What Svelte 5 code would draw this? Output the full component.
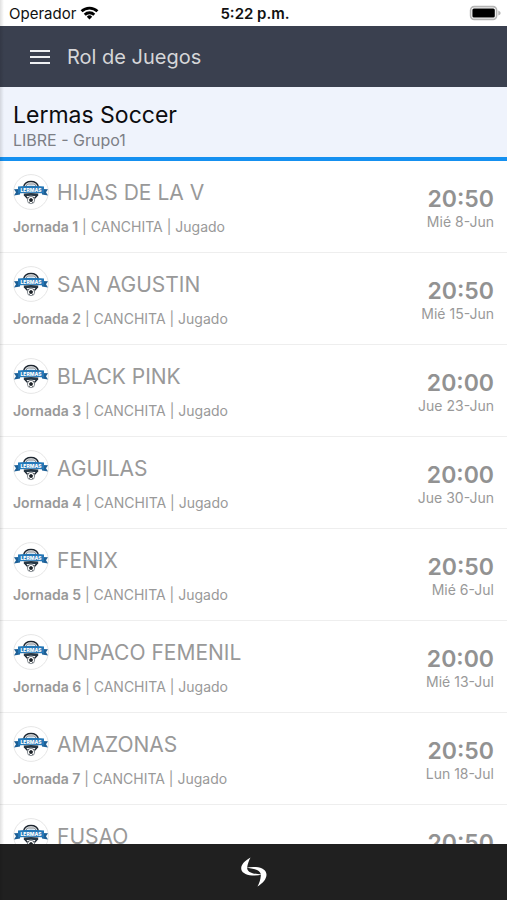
<script>
    let team = "Lermas Soccer";
    let group = "LIBRE - Grupo1";
    let games = [
        { round: 1, rival: "HIJAS DE LA V", time: "20:50", date: "Mié 8-Jun" },
        { round: 2, rival: "SAN AGUSTIN", time: "20:50", date: "Mié 15-Jun" },
        { round: 3, rival: "BLACK PINK", time: "20:00", date: "Jue 23-Jun" },
        { round: 4, rival: "AGUILAS", time: "20:00", date: "Jue 30-Jun" },
        { round: 5, rival: "FENIX", time: "20:50", date: "Mié 6-Jul" },
        { round: 6, rival: "UNPACO FEMENIL", time: "20:00", date: "Mié 13-Jul" },
        { round: 7, rival: "AMAZONAS", time: "20:50", date: "Lun 18-Jul" },
        { round: 8, rival: "FUSAO", time: "20:50", date: "Lun 25-Jul" }
    ];
</script>

<div class="screen">
    <div class="status">
        <div class="carrier">
            <span>Operador</span>
            <svg width="19" height="14" viewBox="0 0 20 15" fill="none" stroke="#000" stroke-width="3" aria-hidden="true">
                <path d="M1.5 5.7a12.2 12.2 0 0 1 17 0" />
                <path d="M4.9 9.3a7.3 7.3 0 0 1 10.2 0" />
                <path d="M10 14.4l-2.9-3a4.2 4.2 0 0 1 5.8 0z" fill="#000" stroke="none" />
            </svg>
        </div>
        <div class="clock">5:22 p.m.</div>
        <div class="battery">
            <svg width="32" height="16" viewBox="0 0 32 16" aria-hidden="true">
                <rect x="1.6" y="1.6" width="26" height="12.8" rx="3.6" fill="#fff" stroke="#b5b5b5" stroke-width="1.6" />
                <rect x="3.4" y="3.4" width="22.4" height="9.2" rx="1.500" fill="#000" />
                <path d="M29.3 5.5q2.4 1 2.4 2.5t-2.4 2.5z" fill="#b5b5b5" />
            </svg>
        </div>
    </div>

    <header>
        <button class="menu" aria-label="Menú">
            <svg width="20" height="14" viewBox="0 0 20 14" aria-hidden="true">
                <path d="M0 1h20M0 7h20M0 13h20" stroke="#eef0f2" stroke-width="2" />
            </svg>
        </button>
        <h1>Rol de Juegos</h1>
    </header>

    <section class="team">
        <h2>{team}</h2>
        <p>{group}</p>
    </section>

    <main>
        <ul>
            {#each games as game}
                <li>
                    <div class="info">
                        <div class="rival">
                            <svg class="crest" width="36" height="36" viewBox="0 0 36 36" aria-hidden="true">
                                <circle cx="18" cy="18" r="17.4" fill="#fff" stroke="#e6e6e6" />
                                <path d="M10.500 13c1-3.800 4-5.500 7.500-5.500s6.500 1.700 7.500 5.500" fill="#fff" stroke="#1d2630" stroke-width="1.300" />
                                <path d="M12.500 12.500l2-2.500h7l2 2.500" fill="none" stroke="#4b5560" stroke-width=".8" />
                                <path d="M11 20.500l4.500 5M25 20.500l-4.500 5" stroke="#1d2630" stroke-width="1.400" />
                                <path d="M1 15.200l6-.2v5.600l-6 .9 2-3.200zM35 15.200l-6-.2v5.600l6 .9-2-3.200z" fill="#1d5f95" />
                                <path d="M5 12.600q13-1.800 26 0v7q-13-1.800-26 0z" fill="#2478b8" />
                                <path d="M10.500 19.500q7.500-1 15 0l-1.500 2.700q-6-.8-12 0z" fill="#253644" />
                                <circle cx="18" cy="26" r="3.700" fill="#fff" stroke="#59616a" stroke-width=".7" />
                                <path d="M18 24.200l1.800 1.300-.7 2h-2.200l-.7-2zM15 24l1.200-.8M21 24l-1.200-.8M16 29l.8-1M20 29l-.8-1" fill="#1b2127" stroke="#1b2127" stroke-width=".6" />
                                <text x="18" y="17.800" text-anchor="middle">LERMAS</text>
                            </svg>
                            <h3>{game.rival}</h3>
                        </div>
                        <p><b>Jornada {game.round}</b> | CANCHITA | Jugado</p>
                    </div>
                    <div class="when">
                        <time>{game.time}</time>
                        <span>{game.date}</span>
                    </div>
                </li>
            {/each}
        </ul>
    </main>

    <footer>
        <svg width="28" height="32" viewBox="0 0 28 32" fill="#fff" aria-hidden="true">
            <path d="M10.500 1.500C5 4.500 1.200 8.500 1.200 12.200c0 4 4 6.600 10.800 7.200 3.500.3 7 0 10-1-4.500 0-8.500-.6-11.200-1.900-2.800-1.300-3.900-3-3.600-5.300.4-3.200 1.800-6.700 3.300-9.700z" />
            <path d="M17.500 30.500c5.500-3.200 9-7.600 9-11.700 0-4.500-4-7.200-10.700-7.800-3.500-.3-7 0-10 1 4.500 0 8.500.7 11.200 2 2.800 1.300 4 3.200 3.800 5.800-.2 3.500-1.500 7.500-3.300 10.700z" />
        </svg>
    </footer>
    <div class="edge"></div>
</div>

<style>
    :global(body) {
        margin: 0;
        background: #fff;
    }
    h1, h2, h3, p, ul {
        margin: 0;
        padding: 0;
        font-weight: 400;
    }
    .screen {
        position: relative;
        display: flex;
        flex-direction: column;
        height: 100vh;
        overflow: hidden;
        font-family: Inter, "Liberation Sans", sans-serif;
        color: #999;
    }

    .status {
        display: grid;
        grid-template-columns: 1fr auto 1fr;
        align-items: center;
        flex: none;
        height: 26px;
        padding: 0 6px 0 9px;
        font-size: 15px;
        color: #111;
    }
    .carrier {
        display: flex;
        align-items: center;
        gap: 4px;
    }
    .clock {
        font-weight: 600;
    }
    .battery {
        display: flex;
        justify-content: flex-end;
    }

    header {
        display: flex;
        align-items: center;
        flex: none;
        gap: 17px;
        height: 61px;
        padding: 0 30px;
        background: #3a404f;
        color: #d5d6d8;
    }
    .menu {
        display: flex;
        padding: 0;
        border: 0;
        background: none;
    }
    h1 {
        font-size: 20px;
    }

    .team {
        flex: none;
        padding: 14px 13px 6px;
        border-bottom: 4px solid #1590f0;
        background: #eff3fc;
    }
    h2 {
        font-size: 23px;
        line-height: 28px;
        color: #0c0c0f;
    }
    .team p {
        font-size: 16px;
        line-height: 22px;
        color: #7d7f86;
    }

    main {
        flex: 1;
        min-height: 0;
        overflow-y: auto;
        scrollbar-width: none;
    }
    ul {
        list-style: none;
    }
    li {
        display: flex;
        justify-content: space-between;
        box-sizing: border-box;
        height: 92px;
        padding: 13px;
        border-bottom: 1px solid #eee;
    }
    .rival {
        display: flex;
        align-items: center;
        gap: 8px;
    }
    .crest text {
        font-size: 5px;
        font-weight: 800;
        fill: #fff;
    }
    h3 {
        font-size: 21px;
    }
    .info p {
        margin-top: 7px;
        font-size: 14px;
        line-height: 20px;
    }
    b {
        font-weight: 600;
    }
    .when {
        display: flex;
        flex-direction: column;
        align-items: flex-end;
        padding-top: 12px;
    }
    time {
        font-size: 23px;
        font-weight: 600;
        line-height: 26px;
        color: #929292;
    }
    .when span {
        font-size: 14px;
        line-height: 20px;
    }

    footer {
        display: flex;
        justify-content: center;
        align-items: center;
        flex: none;
        height: 56px;
        background: #202020;
    }
    .edge {
        position: absolute;
        top: 0;
        bottom: 0;
        left: 0;
        width: 4px;
        background: linear-gradient(to right, rgba(0, 0, 0, 0.12), transparent);
        pointer-events: none;
    }
</style>
